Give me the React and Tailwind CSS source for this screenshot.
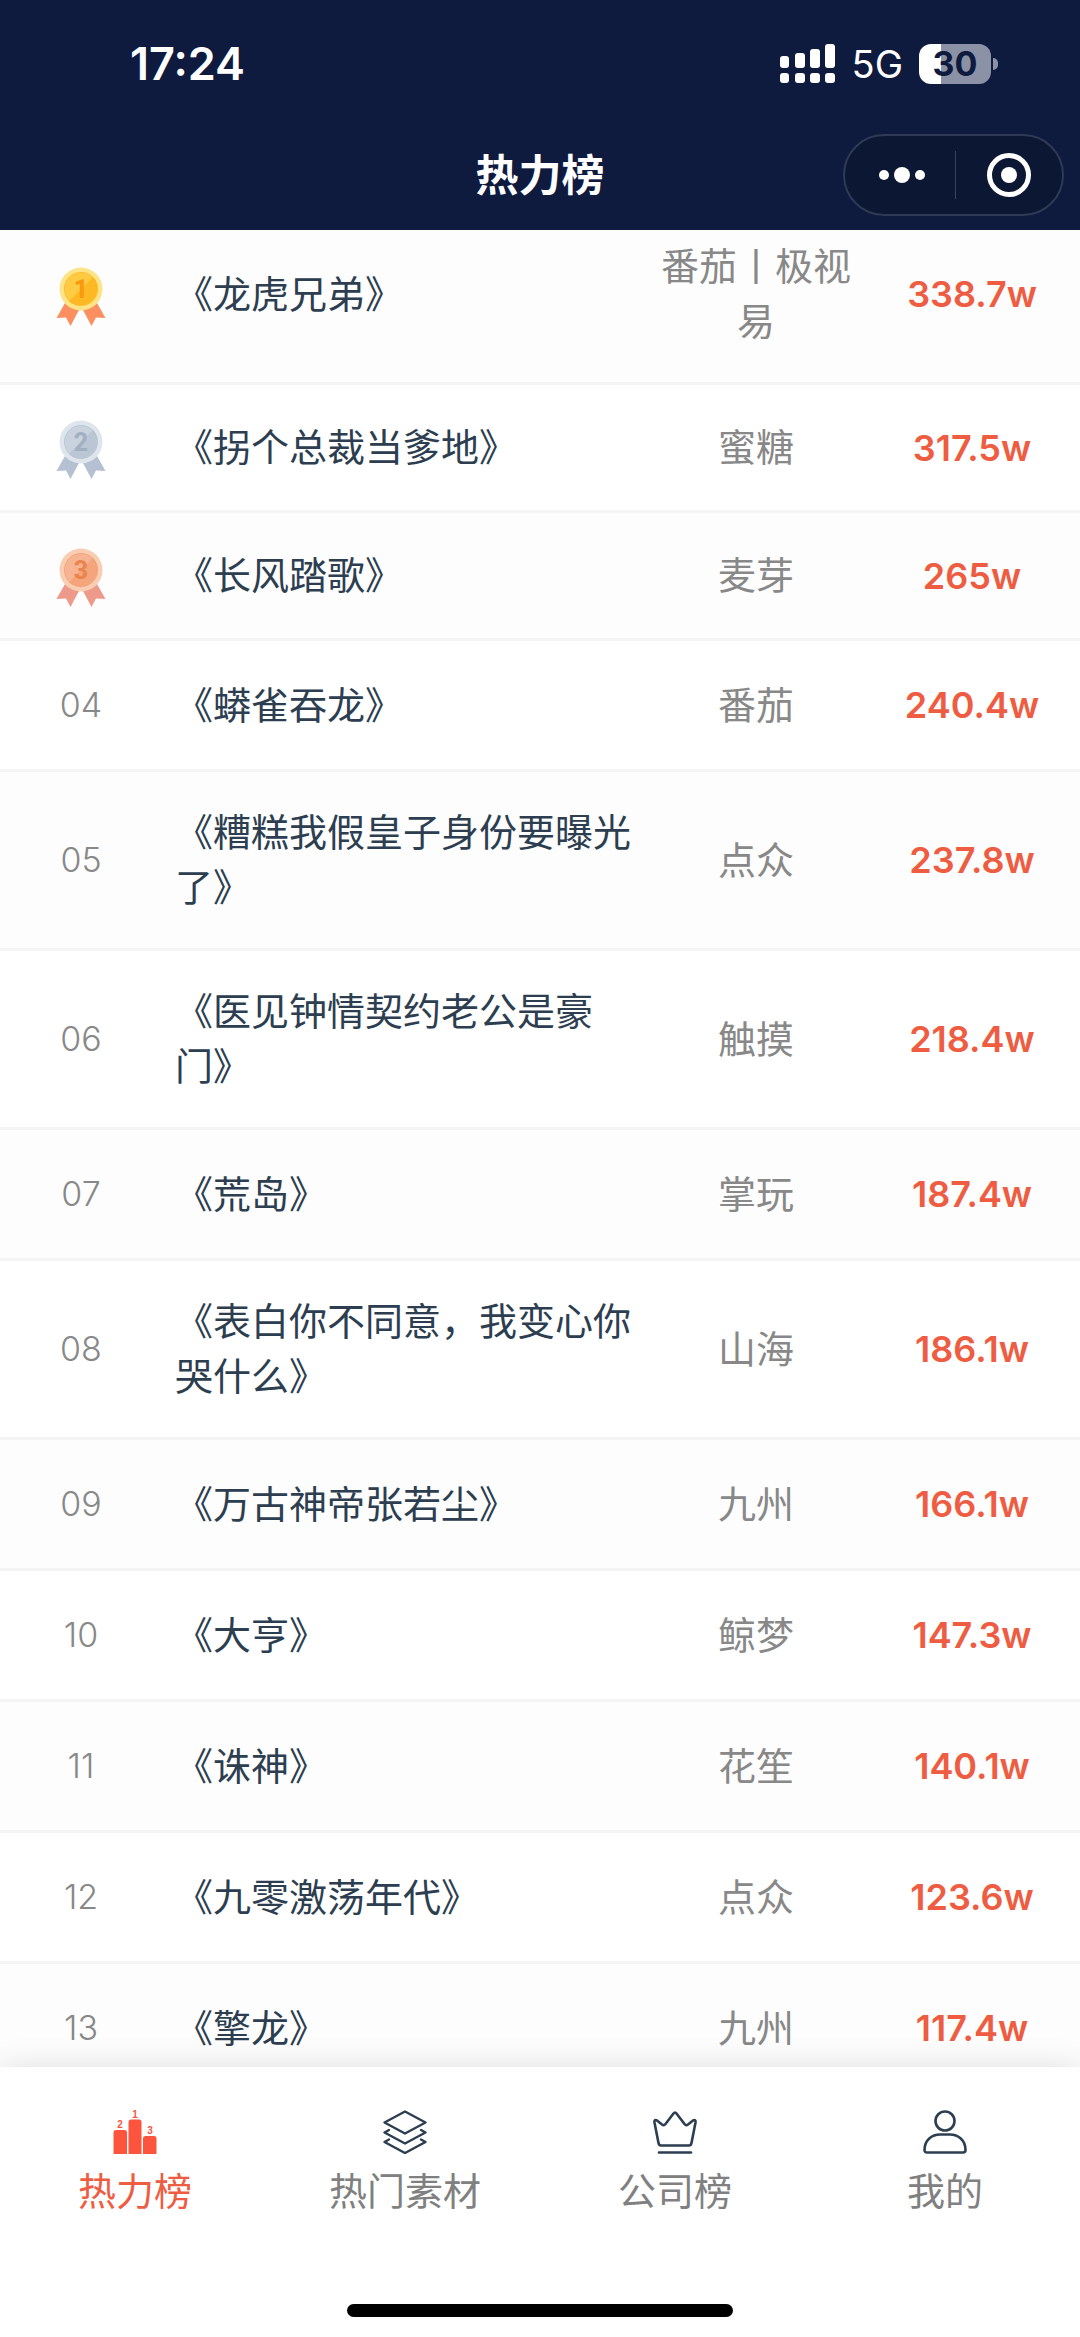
import { useState } from "react"

const rankList = [
  { title: "《龙虎兄弟》", company: "番茄丨极视易", heat: "338.7w" },
  { title: "《拐个总裁当爹地》", company: "蜜糖", heat: "317.5w" },
  { title: "《长风踏歌》", company: "麦芽", heat: "265w" },
  { title: "《蟒雀吞龙》", company: "番茄", heat: "240.4w" },
  { title: "《糟糕我假皇子身份要曝光了》", company: "点众", heat: "237.8w" },
  { title: "《医见钟情契约老公是豪门》", company: "触摸", heat: "218.4w" },
  { title: "《荒岛》", company: "掌玩", heat: "187.4w" },
  { title: "《表白你不同意，我变心你哭什么》", company: "山海", heat: "186.1w" },
  { title: "《万古神帝张若尘》", company: "九州", heat: "166.1w" },
  { title: "《大亨》", company: "鲸梦", heat: "147.3w" },
  { title: "《诛神》", company: "花笙", heat: "140.1w" },
  { title: "《九零激荡年代》", company: "点众", heat: "123.6w" },
  { title: "《擎龙》", company: "九州", heat: "117.4w" }
]

const medalColors = [
  { ring: "#ffe487", face: "#ffcb43", shade: "#fdb924", digit: "#f79a0e", ribbon: "#fb8f60" },
  { ring: "#dfe5ed", face: "#c9d3df", shade: "#bac6d3", digit: "#a3b0c1", ribbon: "#b5c1d2" },
  { ring: "#f9cdb2", face: "#f7b492", shade: "#f4a57c", digit: "#ec8450", ribbon: "#ee9a8b" }
]

function Medal({ place }) {
  const c = medalColors[place - 1]
  return (
    <svg viewBox="0 0 50 60" className="w-[50px] h-[60px] mx-auto mt-[5px]" role="img" aria-label={`${place}`}>
      <path d="M9 36 L0.500 51 L10 50.500 L14.500 59 L23 43 Z" fill={c.ribbon} />
      <path d="M41 36 L49.500 51 L40 50.500 L35.500 59 L27 43 Z" fill={c.ribbon} />
      <circle cx="25" cy="22" r="21.500" fill={c.ring} />
      <circle cx="25" cy="22" r="17" fill={c.face} />
      <path d="M37 10 A17 17 0 0 1 13 34 Z" fill={c.shade} />
      <circle cx="25" cy="22" r="16.500" fill="none" stroke={c.digit} strokeOpacity="0.3" />
      <text x="25" y="31" textAnchor="middle" fontSize="25" fontWeight="800" fontFamily="Roboto, sans-serif" fill={c.digit}>{place}</text>
    </svg>
  )
}

function PodiumIcon() {
  return (
    <svg viewBox="0 0 44 44" className="w-11 h-11 overflow-visible" fill="#fc543d" aria-hidden="true">
      <path d="M0.500 44 V22.500 Q0.500 20 3 20 H11.500 Q14 20 14 22.500 V44 Z" />
      <path d="M15.500 44 V12 Q15.500 9.500 18 9.500 H26 Q28.500 9.500 28.500 12 V44 Z" />
      <path d="M30 44 V28.500 Q30 26 32.500 26 H41 Q43.500 26 43.500 28.500 V44 Z" />
      <g fontSize="10" fontWeight="700" fontFamily="Liberation Sans, sans-serif" textAnchor="middle">
        <text x="7" y="18">2</text>
        <text x="22" y="8">1</text>
        <text x="37" y="24">3</text>
      </g>
    </svg>
  )
}

function LayersIcon() {
  return (
    <svg viewBox="0 0 44 44" className="w-11 h-11" fill="none" stroke="#2c3e50" strokeWidth="2.400" strokeLinecap="round" strokeLinejoin="round" aria-hidden="true">
      <path d="M22 1.500 L42.500 12.500 L22 23.500 L1.500 12.500 Z" />
      <path d="M6 20 L1.500 22.500 L22 33.500 L42.500 22.500 L38 20" />
      <path d="M6 29.500 L1.500 32 L22 43 L42.500 32 L38 29.500" />
    </svg>
  )
}

function CrownIcon() {
  return (
    <svg viewBox="0 0 44 44" className="w-11 h-11" fill="none" stroke="#2c3e50" strokeWidth="2.600" strokeLinecap="round" strokeLinejoin="round" aria-hidden="true">
      <path d="M1.500 12.500 Q1 9 4 10.500 L9 14.500 Q11 16 12.500 14 L20.500 3.500 Q22 1.500 23.500 3.500 L31.500 14 Q33 16 35 14.500 L40 10.500 Q43 9 42.500 12.500 L38.500 33 Q38 35.500 36 35.500 H8 Q6 35.500 5.500 33 Z" />
      <path d="M6 42.500 H38" />
    </svg>
  )
}

function UserIcon() {
  return (
    <svg viewBox="0 0 44 44" className="w-11 h-11" fill="none" stroke="#2c3e50" strokeWidth="2.600" strokeLinejoin="round" aria-hidden="true">
      <circle cx="22" cy="11" r="9.500" />
      <path d="M1.500 40 C1.500 30 9 24.500 17 24.500 H27 C35 24.500 42.500 30 42.500 40 Q42.500 42.500 40 42.500 H4 Q1.500 42.500 1.500 40 Z" />
    </svg>
  )
}

const tabs = [
  { name: "热力榜", Icon: PodiumIcon },
  { name: "热门素材", Icon: LayersIcon },
  { name: "公司榜", Icon: CrownIcon },
  { name: "我的", Icon: UserIcon }
]

function StatusBar() {
  return (
    <div className="flex items-center justify-between h-32 pl-[130px] pr-[82px] text-white">
      <span className="text-[45px] leading-[46px] font-semibold">17:24</span>
      <div className="flex items-center">
        <svg viewBox="0 0 56 40" className="w-14 h-10" fill="#fff" aria-hidden="true">
          <rect x="0" y="12" width="9" height="12" rx="3" />
          <rect x="15" y="9" width="10" height="15" rx="3" />
          <rect x="30" y="5" width="10" height="19" rx="3" />
          <rect x="45" y="0" width="10" height="24" rx="3" />
          <rect x="0" y="29" width="9" height="10" rx="3" />
          <rect x="15" y="29" width="10" height="10" rx="3" />
          <rect x="30" y="29" width="10" height="10" rx="3" />
          <rect x="45" y="29" width="10" height="10" rx="3" />
        </svg>
        <span className="ml-4 text-[38px] leading-10">5G</span>
        <div className="flex items-center gap-0.5 ml-4">
          <div className="flex items-center justify-center w-[72px] h-10 rounded-xl bg-linear-to-r from-white from-30% to-[#8c92a6] to-30% text-[#0e1a3e] text-[34px] leading-10 font-bold">30</div>
          <div className="w-[5px] h-3 rounded-r-full bg-[#8c92a6]"></div>
        </div>
      </div>
    </div>
  )
}

export default function App() {

  const [activeTab, setActiveTab] = useState("热力榜")

  return (
    <div lang="zh-CN" className="flex flex-col h-screen overflow-hidden bg-white font-['Inter','Noto_Sans_CJK_SC',sans-serif]">

      <header className="shrink-0 bg-[#0e1a3e]">
        <StatusBar />
        <div className="grid grid-cols-3 items-center h-[102px] pr-4 pb-2">
          <h1 className="col-start-2 pl-4 text-center text-[43px] leading-[60px] font-semibold text-white">热力榜</h1>
          <div className="justify-self-end flex items-center w-[221px] h-[82px] rounded-full border-2 border-[#2f3a56] bg-[#0c1733]">
            <button aria-label="更多" className="flex-1 flex items-center justify-center gap-[5px] h-full pl-1 cursor-pointer">
              <span className="w-2.5 h-2.5 rounded-full bg-white"></span>
              <span className="w-4 h-4 rounded-full bg-white"></span>
              <span className="w-2.5 h-2.5 rounded-full bg-white"></span>
            </button>
            <span className="w-px h-12 bg-[#3a4460]"></span>
            <button aria-label="关闭" className="flex-1 flex items-center justify-center h-full cursor-pointer">
              <span className="flex items-center justify-center w-11 h-11 rounded-full border-[5px] border-white">
                <span className="w-4 h-4 rounded-full bg-white"></span>
              </span>
            </button>
          </div>
        </div>
      </header>

      {/* Ranking */}
      <main className="flex-1 min-h-0 overflow-hidden">
        <table className="w-full -mt-6 table-fixed border-separate border-spacing-0 text-[38px] leading-[55px]">
          <colgroup>
            <col className="w-[15%]" />
            <col className="w-[45%]" />
            <col className="w-[20%]" />
            <col className="w-[20%]" />
          </colgroup>
          <tbody>
            {rankList.map((item, i) => (
              <tr key={item.title} className="odd:bg-[#fdfdfd] even:bg-white">
                <td className="py-[30px] border-b-[3px] border-[#f4f4f4] text-center text-[34px] leading-[68px] font-light text-[#888888]">
                  {i < 3 ? <Medal place={i + 1} /> : String(i + 1).padStart(2, "0")}
                </td>
                <td className="py-[33px] pl-[13px] border-b-[3px] border-[#f4f4f4] text-[#2c3e50]">{item.title}</td>
                <td className="py-[33px] border-b-[3px] border-[#f4f4f4] text-center text-[#888888]">{item.company}</td>
                <td className="py-[33px] border-b-[3px] border-[#f4f4f4] text-center text-4xl font-semibold text-[#ee5c42]">{item.heat}</td>
              </tr>
            ))}
          </tbody>
        </table>
      </main>

      {/* Tab bar */}
      <nav className="relative shrink-0 bg-white pt-[43px] shadow-[0_0_30px_rgba(0,0,0,0.12)]">
        <div className="grid grid-cols-4">
          {tabs.map(({ name, Icon }) => (
            <button
              key={name}
              onClick={() => setActiveTab(name)}
              className={`flex flex-col items-center gap-2.5 cursor-pointer text-[38px] leading-[55px] ${activeTab === name ? "text-[#ee5c42]" : "text-[#808080]"}`}
            >
              <Icon />
              <span>{name}</span>
            </button>
          ))}
        </div>
        <div className="w-[386px] h-[13px] mx-auto mt-[85px] mb-5 rounded-full bg-black"></div>
      </nav>

    </div>
  )
}
